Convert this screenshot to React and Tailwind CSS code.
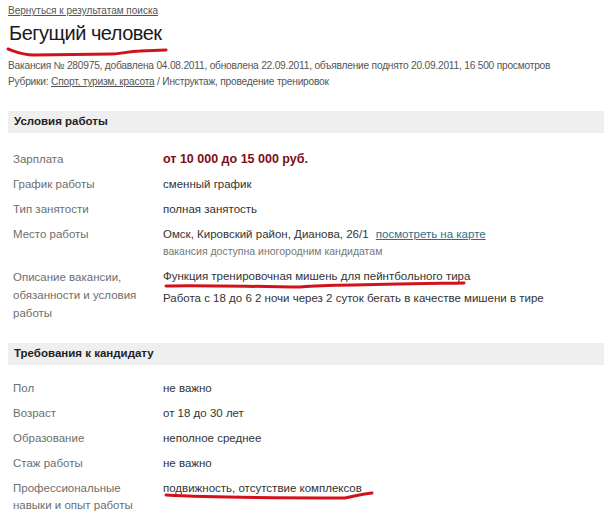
import React from 'react';

const conditions = [
  { label: 'График работы', value: 'сменный график' },
  { label: 'Тип занятости', value: 'полная занятость' },
];

const requirements = [
  { label: 'Пол', value: 'не важно' },
  { label: 'Возраст', value: 'от 18 до 30 лет' },
  { label: 'Образование', value: 'неполное среднее' },
  { label: 'Стаж работы', value: 'не важно' },
];

const Row = ({ label, children }) => (
  <div className="grid grid-cols-[150px_1fr] py-[4px] leading-[17px]">
    <div className="text-[11.5px] text-[#6e6e6e]">{label}</div>
    <div className="text-[11.5px] text-[#333]">{children}</div>
  </div>
);

const Band = ({ title }) => (
  <div className="h-[22px] bg-[#efefef] pl-[6px] flex items-center">
    <span className="text-[11.5px] font-bold text-[#222]">{title}</span>
  </div>
);

// red marker strokes drawn over the page
const Marker = () => (
  <svg className="absolute left-0 top-0 pointer-events-none" width="604" height="511" viewBox="0 0 604 511">
    <g fill="none" stroke="#d2121b" strokeWidth="3" strokeLinecap="round">
      <path d="M8 49 C14 51, 22 55, 34 55 L112 54 C122 54, 128 51, 140 51 L166 50" />
      <path d="M166 286 C200 285, 280 287, 300 287 C320 285, 400 284, 464 283" />
      <path d="M166 495 C200 497, 280 498, 345 498 C355 496, 360 494, 372 493" />
    </g>
  </svg>
);

export default function App() {
  return (
    <div className="relative w-[604px] h-[511px] overflow-hidden bg-white font-['Liberation_Sans',Arial,sans-serif]">
      <div className="pl-[8px] pt-[5px]">
        <a className="text-[10px] leading-[12px] text-[#555] underline block">Вернуться к результатам поиска</a>
        <h1 className="mt-[4px] text-[20px] leading-[24px] tracking-[-0.5px] text-[#1a1a1a] pl-[1px]">Бегущий человек</h1>
        <div className="mt-[14px] text-[10.2px] leading-[14px] tracking-[-0.22px] text-[#555]">
          Вакансия № 280975, добавлена 04.08.2011, обновлена 22.09.2011, объявление поднято 20.09.2011, 16 500 просмотров
        </div>
        <div className="mt-[2px] text-[10.2px] leading-[14px] tracking-[-0.22px] text-[#555]">
          Рубрики: <span className="underline">Спорт, туризм, красота</span> / Инструктаж, проведение тренировок
        </div>

        <div className="mt-[22px]">
          <Band title="Условия работы" />
        </div>
        <div className="pl-[5px] pt-[14px]">
          <div className="grid grid-cols-[150px_1fr] py-[4px] leading-[17px]">
            <div className="text-[11.5px] text-[#6e6e6e]">Зарплата</div>
            <div className="text-[12.5px] font-bold text-[#7d0d16]">от 10 000 до 15 000 руб.</div>
          </div>
          {conditions.map((r) => (
            <Row key={r.label} label={r.label}>{r.value}</Row>
          ))}
          <Row label="Место работы">
            <div>
              Омск, Кировский район, Дианова, 26/1{' '}
              <a className="ml-[4px] text-[#2b6f8c] underline">посмотреть на карте</a>
            </div>
            <div className="text-[10.5px] text-[#777]">вакансия доступна иногородним кандидатам</div>
          </Row>
          <div className="grid grid-cols-[150px_1fr] py-[4px]">
            <div className="text-[11.5px] leading-[18px] text-[#6e6e6e]">
              Описание вакансии,<br />обязанности и условия<br />работы
            </div>
            <div className="text-[11.5px] leading-[17px] text-[#333]">
              <p>Функция тренировочная мишень для пейнтбольного тира</p>
              <p className="mt-[5px]">Работа с 18 до 6 2 ночи через 2 суток бегать в качестве мишени в тире</p>
            </div>
          </div>
        </div>

        <div className="mt-[17px]">
          <Band title="Требования к кандидату" />
        </div>
        <div className="pl-[5px] pt-[11px]">
          {requirements.map((r) => (
            <Row key={r.label} label={r.label}>{r.value}</Row>
          ))}
          <div className="grid grid-cols-[150px_1fr] py-[4px]">
            <div className="text-[11.5px] leading-[17px] text-[#6e6e6e]">
              Профессиональные<br />навыки и опыт работы
            </div>
            <div className="text-[11.5px] leading-[17px] text-[#333]">подвижность, отсутствие комплексов</div>
          </div>
        </div>
      </div>
      <Marker />
    </div>
  );
}
